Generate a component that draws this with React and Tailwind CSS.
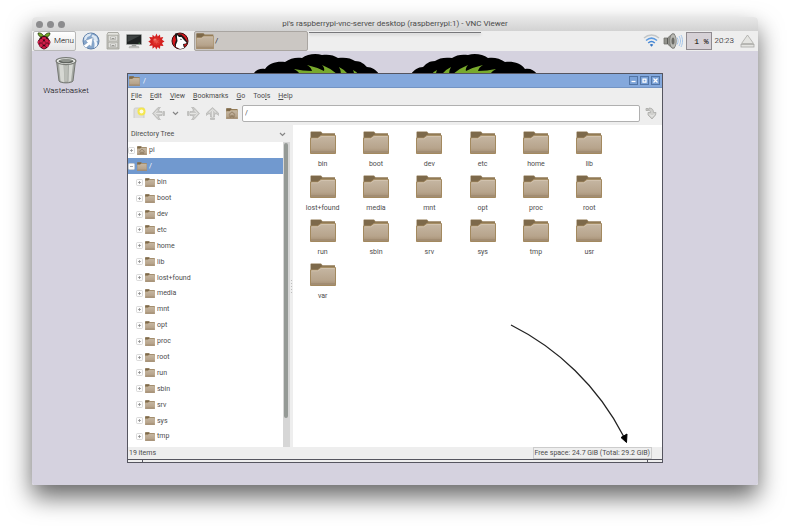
import React, { useId, useState } from 'react';

const directories = [
    'bin', 'boot', 'dev', 'etc', 'home', 'lib', 'lost+found', 'media', 'mnt', 'opt',
    'proc', 'root', 'run', 'sbin', 'srv', 'sys', 'tmp', 'usr', 'var',
];

// label split around the underlined mnemonic letter
const menus = [
    ['', 'F', 'ile'],
    ['', 'E', 'dit'],
    ['', 'V', 'iew'],
    ['', 'B', 'ookmarks'],
    ['', 'G', 'o'],
    ['Too', 'l', 's'],
    ['', 'H', 'elp'],
];

const FolderIcon = ({ className, home }) => {
    const id = useId();
    return (
        <svg className={className} viewBox="0 0 26 23" preserveAspectRatio="none" aria-hidden="true">
            <defs>
                <linearGradient id={id} x1="0" y1="0" x2="0" y2="1">
                    <stop offset="0" stopColor="#c6b7a3" />
                    <stop offset="0.7" stopColor="#b7a48c" />
                    <stop offset="1" stopColor="#a38d70" />
                </linearGradient>
            </defs>
            <path d="M1 0.5h10l1.5 1.8H25V8H0.5V1z" fill="#917a55" />
            <path d="M1 1h9.5l1.5 2-4 4H1z" fill="#7d694a" />
            <path d="M0.5 7h7L11 4.5h14.5V22.5h-25z" fill={`url(#${id})`} stroke="#a3895f" strokeWidth="1" />
            <path d="M1 20h24v2H1z" fill="#a28d73" />
            <path d="M1.5 7.8h6.3L11.3 5.4h13.4" fill="none" stroke="#d5c7b3" strokeWidth="0.8" />
            {home && (
                <path d="M6 14l7-6 7 6M8.500 14v5h3v-3h3v3h3v-5" fill="none" stroke="#857154" strokeWidth="1.600" />
            )}
        </svg>
    );
};

const RaspberryIcon = () => (
    <svg className="w-3.5 h-[18px]" viewBox="0 0 28 36" aria-hidden="true">
        <path d="M14 9C11 3 6 1 2 2c0 5 4 9 10 9zM14 9c3-6 8-8 12-7 0 5-4 9-10 9z" fill="#75a928" stroke="#22330c" strokeWidth="1.500" />
        <path d="M14 8c5 0 9 3 10 7 3 2 4 7 1 10-1 4-6 9-11 10C9 34 4 29 3 25c-3-3-2-8 1-10 1-4 5-7 10-7z" fill="#3a0714" />
        <g fill="#d31c4a">
            <ellipse cx="14" cy="12.500" rx="4.500" ry="2.700" />
            <ellipse cx="8.500" cy="17.500" rx="4" ry="3.400" transform="rotate(-35 8.500 17.500)" />
            <ellipse cx="19.500" cy="17.500" rx="4" ry="3.400" transform="rotate(35 19.500 17.500)" />
            <circle cx="14" cy="22" r="3.600" />
            <ellipse cx="3.500" cy="20.500" rx="1.800" ry="3.500" />
            <ellipse cx="24.500" cy="20.500" rx="1.800" ry="3.500" />
            <ellipse cx="8" cy="26.500" rx="3.400" ry="3.800" />
            <ellipse cx="20" cy="26.500" rx="3.400" ry="3.800" />
            <ellipse cx="14" cy="31" rx="3.800" ry="2.600" />
        </g>
    </svg>
);

const GlobeIcon = () => (
    <svg className="size-[18px]" viewBox="0 0 36 36" aria-hidden="true">
        <circle cx="18" cy="18" r="16" fill="#86a6cc" stroke="#5f7fa8" strokeWidth="2" />
        <path d="M5 10c4-6 10-8 14-7l-3 5-5 2-3 6-4 1zM21 5l8 4 3 8-4 2-3-5-4-1-2-4z" fill="#dde8f3" />
        <path d="M22 11L7 17l4 4-8 6 5 5 7-6 4 4z" fill="#fff" stroke="#6e8cb0" strokeWidth="1" />
        <path d="M24 14c5 3 8 8 6 14l-6 4c2-6 1-11-1-16z" fill="#f1f5fa" />
    </svg>
);

const CabinetIcon = () => (
    <svg className="w-3.5 h-[18px]" viewBox="0 0 28 36" aria-hidden="true">
        <path d="M4 1h20l2 4v29H2V5z" fill="#c3c3bd" stroke="#9b9b94" strokeWidth="1.500" />
        <path d="M4.500 2h19l1.500 3H3z" fill="#e4e4df" />
        <rect x="4.500" y="7" width="19" height="11" fill="#dededa" stroke="#a5a59e" />
        <rect x="4.500" y="20.500" width="19" height="11" fill="#dededa" stroke="#a5a59e" />
        <path d="M9 10h10v5H9zM9 24h10v5H9z" fill="#fafafa" stroke="#8d8d86" />
        <path d="M11 13h6M11 27h6" stroke="#77776f" strokeWidth="1.500" />
    </svg>
);

const MonitorIcon = () => (
    <svg className="size-4" viewBox="0 0 32 32" aria-hidden="true">
        <rect x="1" y="3" width="30" height="20" rx="1" fill="#1e2222" stroke="#a2a6a4" strokeWidth="1.500" />
        <path d="M3 5h26L3 18z" fill="#3d4242" />
        <path d="M12 23h8l1 4H11z" fill="#9a9d9a" />
        <path d="M7 27h18l1 2.500H6z" fill="#d0d0cc" stroke="#9a9d9a" />
        <path d="M25 20.500h3" stroke="#6fd36f" strokeWidth="1" />
    </svg>
);

const MathematicaIcon = () => (
    <svg className="size-[17px]" viewBox="0 0 34 34" aria-hidden="true">
        <path
            d="M17 1l2.500 6 4.500-4 .5 6 6-1-2.500 5.500 5 3.500-5 3 3 6-6.500-.5-.5 6.500-4.500-4-3 5-2.500-5.500-5 4 0-6.500-6.500 1 3-5.500-5-3.500 5-3-3-6 6.500.5V3.500l5 4z"
            fill="#d4201f"
        />
        <circle cx="17" cy="17" r="8" fill="#dc2f29" />
        <circle cx="14" cy="14" r="3" fill="#ef7a70" />
        <path d="M17 12l1.500 3 3.500-1-2 3 2 3-3.500-1L17 22l-1.500-3-3.500 1 2-3-2-3 3.500 1z" fill="#e85148" />
    </svg>
);

const WolframIcon = () => (
    <svg className="size-[18px]" viewBox="0 0 36 36" aria-hidden="true">
        <circle cx="18" cy="18" r="16" fill="#d9171c" stroke="#3a0f0f" strokeWidth="2" />
        <path d="M9 2l6 3 6 0 6 6 6 9-2 4-5 1 2 7-9 2-9-3-3-6 3-9-2-8z" fill="#191717" />
        <path d="M12 6l4 4 5 0 4 5 6 6-1 2-6 1 1 5 2 3-9 2-8-4 0-5 3-7-1-7z" fill="#fff" />
        <path d="M19 13l3 3-3 0z" fill="#191717" />
    </svg>
);

const WifiIcon = () => (
    <svg className="w-[17px] h-3.5" viewBox="0 0 34 28" fill="none" strokeWidth="3" aria-hidden="true">
        <path d="M2 8c9-8 21-8 30 0" stroke="#c2c6c8" />
        <path d="M6 13c7-6 15-6 22 0" stroke="#5c9ae0" />
        <path d="M10.500 18c4-4 9-4 13 0" stroke="#4487d6" />
        <path d="M13.500 21.500c2-2 5-2 7 0L17 25.500z" fill="#3475c4" />
    </svg>
);

const VolumeIcon = () => (
    <svg className="w-5 h-[18px]" viewBox="0 0 40 36" aria-hidden="true">
        <path d="M2 12h7L18 4h5v28h-5l-9-8H2z" fill="#92928c" stroke="#6e6e69" strokeWidth="1.500" />
        <path d="M9 12v12" stroke="#5b5b57" strokeWidth="2" />
        <ellipse cx="20" cy="18" rx="6.500" ry="14.500" fill="#b9b9b3" stroke="#767671" strokeWidth="1.500" />
        <ellipse cx="20" cy="18" rx="3" ry="7" fill="#6b6b66" />
        <path d="M28 11c3 5 3 9 0 14M32 8c4 7 4 13 0 20M36 6c4 8 4 16 0 24" fill="none" stroke="#9dbfe8" strokeWidth="1.800" />
    </svg>
);

const EjectIcon = () => (
    <svg className="w-[15px] h-3.5" viewBox="0 0 30 28" aria-hidden="true">
        <path d="M15 2L27 19H3z" fill="#e4e4e1" stroke="#a5a5a1" strokeWidth="1.500" />
        <rect x="2" y="21" width="26" height="5" fill="#e4e4e1" stroke="#a5a5a1" strokeWidth="1.500" />
    </svg>
);

const TrashIcon = () => (
    <svg className="w-6 h-7" viewBox="0 0 48 56" aria-hidden="true">
        <path d="M5 9l5 41c3 5 25 5 28 0L43 9z" fill="#a5a8a3" stroke="#747772" strokeWidth="2" />
        <path d="M10 16l3 33c2 2 5 3 8 3l-2-35zM30 18l-1 34 5-2 4-34z" fill="#d6d8d3" />
        <path d="M20 18l1 33h6l1-33z" fill="#bbbeb8" />
        <ellipse cx="24" cy="10" rx="20" ry="7" fill="#eceeea" stroke="#777a75" strokeWidth="2.500" />
        <ellipse cx="24" cy="10.500" rx="15" ry="4.200" fill="#5f635e" />
        <path d="M11 9c6-4 20-4 26 0l-7 3H18z" fill="#8f938d" />
    </svg>
);

const ArrowIcon = ({ className }) => (
    <svg className={className} viewBox="0 0 26 26" aria-hidden="true">
        <path d="M25 9v8h-3V9zM20 9v8h-6v5l3 3h-5L1 13 12 1h5l-3 3v5z" fill="#c9c9c7" stroke="#a9a9a7" strokeWidth="1" />
        <path d="M11 6l-6 7 6 7M7 13h13" fill="none" stroke="#e5e5e3" strokeWidth="2" />
    </svg>
);

const ChevronIcon = () => (
    <svg className="w-[7px] h-[5px]" viewBox="0 0 14 10" aria-hidden="true">
        <path d="M2 2l5 5 5-5" fill="none" stroke="#858585" strokeWidth="2.400" />
    </svg>
);

const NewTabIcon = () => (
    <svg className="w-[13px] h-3" viewBox="0 0 26 24" aria-hidden="true">
        <path d="M2 22V5c0-2 1-3 3-3h17v20" fill="#dfdfdc" stroke="#c4c4c0" strokeWidth="1.500" />
        <circle cx="17" cy="9" r="8" fill="#f4e74f" />
        <circle cx="17" cy="9" r="4" fill="#fffde0" />
    </svg>
);

const GoIcon = () => (
    <svg className="w-3 h-[13px]" viewBox="0 0 24 26" aria-hidden="true">
        <path d="M2 3h4v4H2zM8 2c6 0 9 3 9 9h5l-1 5-7 8-8-8v-5h5c0-3-1-4-4-4z" fill="#cfcfcc" stroke="#a6a6a3" strokeWidth="1.500" />
        <path d="M10 15l4 4 4-4" fill="none" stroke="#f3f3f1" strokeWidth="2" />
    </svg>
);

// tops of the wallpaper leaves that show above the file manager window
const Leaf = ({ className }) => (
    <svg className={className} viewBox="0 0 126 20" aria-hidden="true">
        <path
            d="M0 20c3-4 7-6 12-5 4-6 12-8 20-7 5-4 12-5 17-4 5-4 14-5 20-3 6-1 12 0 16 3 7-1 13 0 17 3 6 0 9 3 12 6 5 0 9 3 12 7z"
            fill="#000"
        />
        <path
            d="M24 20q5-2 10 0zM47 20q-2-3-6-5 9 2 18 2-1-4-5-6 9 2 17 6 1-3-2-6 8 3 15 9zM88 20q0-4-2-7 6 3 9 7zM101 20q0-2-1-4 4 2 5 4z"
            fill="#78a92c"
        />
    </svg>
);

const TreeRow = ({ name, child, open, home, onClick }) => (
    <li className={`flex-1 min-h-0 flex ${child ? 'pl-2' : ''} ${open ? 'bg-[#7199cf] text-white' : ''}`}>
        <button type="button" onClick={onClick} className="flex items-center flex-1 min-w-0 pt-px text-left">
            <svg className="size-[7px] mr-0.5 shrink-0" viewBox="0 0 14 14" aria-hidden="true">
                <rect x="1" y="1" width="12" height="12" rx="2" fill="#fdfdfd" stroke="#cfcfcf" strokeWidth="1.500" />
                <path d={open ? 'M4 7h6' : 'M4 7h6M7 4v6'} stroke="#8a8a8a" strokeWidth="1.500" />
            </svg>
            <FolderIcon className="w-2.5 h-[9px] mr-0.5 shrink-0" home={home} />
            {name}
        </button>
    </li>
);

const TitleButton = ({ label, children }) => (
    <button
        type="button"
        aria-label={label}
        className="size-[9px] border border-[#5375a5] bg-[#7ba2d8] flex items-center justify-center"
    >
        <svg className="size-[5px]" viewBox="0 0 10 10" stroke="#fff" strokeWidth="2.500" fill="none" aria-hidden="true">
            {children}
        </svg>
    </button>
);

const FileManager = () => {
    const [path, setPath] = useState('/');

    return (
        <section className="relative mx-[95px] mt-[22px] border border-[#55555f] bg-[#eeeeee] text-[7px] text-[#4c4c4c]">
            <header className="h-3.5 bg-[#84a8dc] border-b border-[#7394c4] flex items-center gap-[3px] pl-px pr-0.5">
                <FolderIcon className="w-[11px] h-2.5" />
                <h1 className="flex-1 text-white">/</h1>
                <div className="flex gap-0.5">
                    <TitleButton label="Minimise"><path d="M1 7h8" /></TitleButton>
                    <TitleButton label="Maximise"><path d="M2 2h6v6H2z" /></TitleButton>
                    <TitleButton label="Close"><path d="M1 1l8 8M9 1L1 9" /></TitleButton>
                </div>
            </header>

            <nav className="h-[15px] flex items-center gap-2 px-[3px]">
                {menus.map(([before, key, after]) => (
                    <button type="button" key={before + key + after}>
                        {before}<span className="underline">{key}</span>{after}
                    </button>
                ))}
            </nav>

            <div className="h-[22px] flex items-center px-[5px] pb-0.5">
                <button type="button" aria-label="New tab" className="mr-1.5"><NewTabIcon /></button>
                <button type="button" aria-label="Back" className="mr-[7px]"><ArrowIcon className="size-[13px]" /></button>
                <button type="button" aria-label="History" className="mr-2"><ChevronIcon /></button>
                <button type="button" aria-label="Forward" className="mr-1.5"><ArrowIcon className="size-[13px] rotate-180" /></button>
                <button type="button" aria-label="Up" className="mr-[7px]"><ArrowIcon className="size-[13px] rotate-90" /></button>
                <button type="button" aria-label="Home" className="mr-1"><FolderIcon className="w-3 h-[11px]" home /></button>
                <input
                    type="text"
                    aria-label="Location"
                    value={path}
                    onChange={(e) => setPath(e.target.value)}
                    className="flex-1 min-w-0 h-[17px] px-0.5 bg-white border border-[#b0b0b0] rounded-xs"
                />
                <button type="button" aria-label="Go to location" className="ml-[5px]"><GoIcon /></button>
            </div>

            <div className="flex h-[322px]">
                <aside className="w-[162px] shrink-0 flex flex-col">
                    <button type="button" className="h-[17px] flex items-center justify-between pl-[3px] pr-1 pt-px">
                        Directory Tree
                        <ChevronIcon />
                    </button>
                    <div className="flex flex-1 min-h-0">
                        <ul className="flex-1 flex flex-col bg-white pb-[3px]">
                            <TreeRow name="pi" home onClick={() => setPath('/home/pi')} />
                            <TreeRow name="/" open onClick={() => setPath('/')} />
                            {directories.slice(0, 17).map((name) => (
                                <TreeRow key={name} name={name} child onClick={() => setPath(`/${name}`)} />
                            ))}
                        </ul>
                        <div className="w-[7px] bg-[#d6d6d6] pl-px pr-0.5 pt-px pb-[29px] flex">
                            <div className="flex-1 rounded-full bg-[#959a96]"></div>
                        </div>
                    </div>
                </aside>

                <div className="w-[3px] flex flex-col items-center justify-center gap-0.5">
                    {[0, 1, 2, 3, 4].map((dot) => (
                        <span key={dot} className="size-px bg-[#bdbdbd]"></span>
                    ))}
                </div>

                <ul className="flex-1 bg-white grid grid-cols-[repeat(auto-fill,minmax(53px,1fr))] auto-rows-[44px] content-start pl-[3px] pr-[46px] pt-1.5">
                    {directories.map((name) => (
                        <li key={name} className="flex flex-col items-center">
                            <button type="button" className="flex flex-col items-center">
                                <FolderIcon className="w-[26px] h-[23px] mb-[5px]" />
                                {name}
                            </button>
                        </li>
                    ))}
                </ul>
            </div>

            <footer className="h-3 flex items-center justify-between pl-px pr-2.5">
                <span>19 items</span>
                <span className="px-px border border-[#cccccc]">Free space: 24.7 GiB (Total: 29.2 GiB)</span>
            </footer>
            <div className="h-[3px] border-t border-[#55555f] bg-[#eeeeee] flex justify-between px-3.5">
                <span className="w-px bg-[#55555f]"></span>
                <span className="w-px bg-[#55555f]"></span>
            </div>

            {/* annotation pointing at the free space readout */}
            <svg className="absolute right-[29px] bottom-[18px] w-[124px] h-[122px]" viewBox="0 0 124 122" aria-hidden="true">
                <path d="M2 3C48 26 89 64 115 115" fill="none" stroke="#222" strokeWidth="1.300" />
                <path d="M112 115.500l6-3.500-.5 8.500z" fill="#000" stroke="#000" />
            </svg>
        </section>
    );
};

const App = () => (
    <main className="px-8 pt-[17px] pb-[45px] bg-white font-['Roboto',sans-serif] text-[8px] leading-[10px] text-[#333]">
        <div className="rounded-t-[4px] rounded-b-[2px] shadow-[0_12px_24px_rgba(0,0,0,0.6)]">
            <header className="relative h-3.5 rounded-t-[4px] bg-linear-to-b from-[#e8e8e8] to-[#d2d2d2] flex items-center justify-center text-[#4a4a4a]">
                <div className="absolute left-1 flex gap-1">
                    <span className="size-[7px] rounded-full bg-[#8c8c8e]"></span>
                    <span className="size-[7px] rounded-full bg-[#8c8c8e]"></span>
                    <span className="size-[7px] rounded-full bg-[#8c8c8e]"></span>
                </div>
                <p className="whitespace-nowrap">pi's raspberrypi-vnc-server desktop (raspberrypi:1) - VNC Viewer</p>
            </header>

            <div className="relative h-5 bg-[#eeeeee] flex items-center pl-px pr-[3px]">
                <button
                    type="button"
                    className="h-5 w-[43px] border border-[#b8b8b8] rounded-xs bg-linear-to-b from-white to-[#e6e6e6] flex items-center gap-[3px] pl-[3px] mr-1.5 font-light text-black"
                >
                    <RaspberryIcon />
                    Menu
                </button>
                <button type="button" aria-label="Web browser" className="mr-1.5"><GlobeIcon /></button>
                <button type="button" aria-label="File manager" className="mr-1.5"><CabinetIcon /></button>
                <button type="button" aria-label="Terminal" className="mr-1.5"><MonitorIcon /></button>
                <button type="button" aria-label="Mathematica" className="mr-1.5"><MathematicaIcon /></button>
                <button type="button" aria-label="Wolfram" className="mr-[5px]"><WolframIcon /></button>
                <button
                    type="button"
                    className="h-5 w-[114px] border border-[#a9a5a1] rounded-xs bg-[#cbc7c3] flex items-center gap-px pl-px"
                >
                    <FolderIcon className="w-[18px] h-4" />
                    /
                </button>

                <div className="ml-auto flex items-center">
                    <WifiIcon />
                    <span className="mx-[3px]"><VolumeIcon /></span>
                    <span className="w-[26px] h-[18px] border border-[#8f8a8f] bg-[#d6d1d6] text-right pr-0.5 leading-[17px] font-['Liberation_Mono',monospace] text-black">
                        1 %
                    </span>
                    <time className="ml-[3px] mr-1.5 font-light text-black">20:23</time>
                    <button type="button" aria-label="Eject"><EjectIcon /></button>
                </div>

                <div className="absolute top-0 left-1/2 -translate-x-1/2 w-[172px] h-0.5 bg-[#eeeeee] border-b border-[#77777a] shadow-[0_2px_3px_rgba(0,0,0,0.12)]"></div>
            </div>

            <div className="relative flow-root bg-[#d5d2df] rounded-b-[2px] pb-[22px]">
                <div className="absolute inset-x-0 top-[3px] flex justify-center gap-8">
                    <Leaf className="w-[126px] h-5" />
                    <Leaf className="w-[126px] h-5 -scale-x-100" />
                </div>
                <button type="button" className="absolute left-3 top-[5px] w-11 flex flex-col items-center text-black font-light">
                    <TrashIcon />
                    <span className="mt-0.5 whitespace-nowrap">Wastebasket</span>
                </button>
                <FileManager />
            </div>
        </div>
    </main>
);

export default App;
